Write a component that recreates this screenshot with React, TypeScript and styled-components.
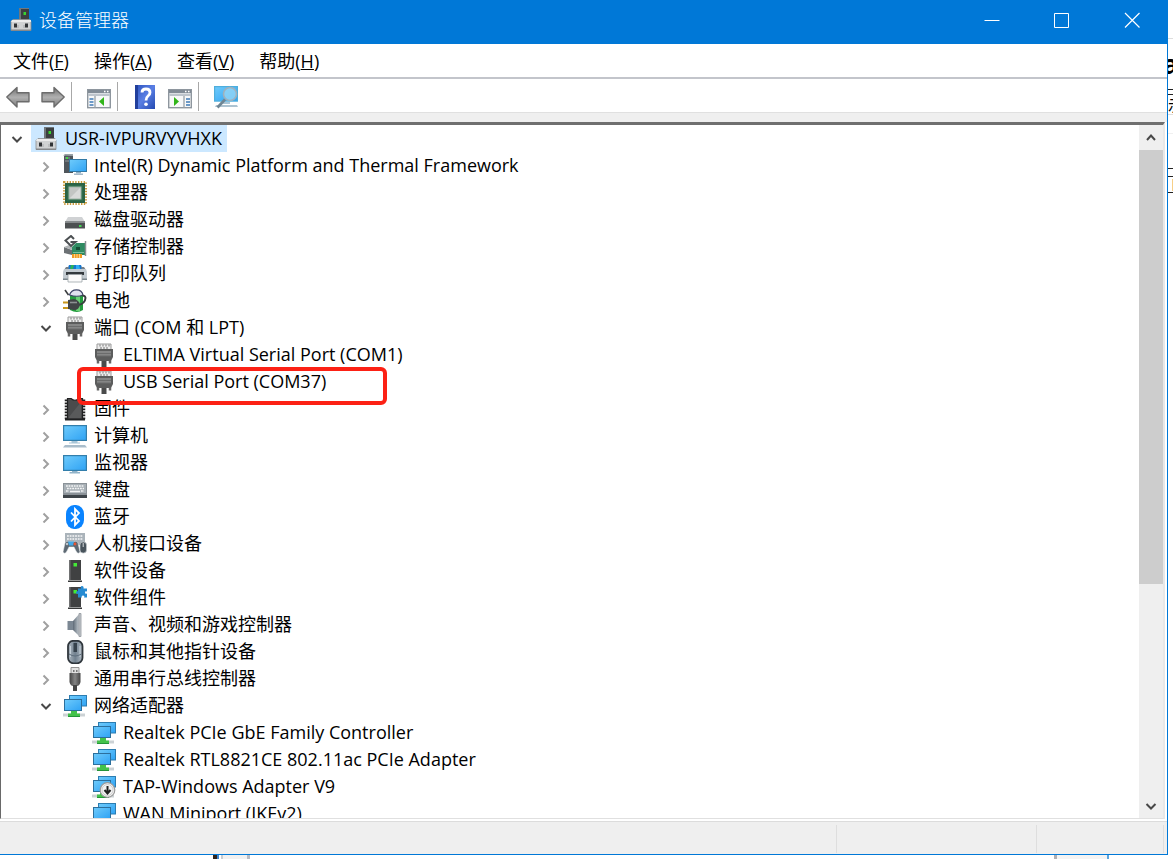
import React from 'react';
import styled, { createGlobalStyle, css } from 'styled-components';

const GlobalStyle = createGlobalStyle`
  * { box-sizing: border-box; }
  html, body { margin: 0; padding: 0; background: #fff; }
  body, button {
    font-family: "Open Sans", "Noto Sans CJK SC", sans-serif;
    font-size: 18px;
    line-height: 27px;
    color: #000;
  }
  button { border: 0; padding: 0; margin: 0; background: transparent; }
  svg { display: block; flex: none; }
`;

/* ---------- layout ---------- */

const Desktop = styled.div`
  display: flex;
  flex-direction: column;
  height: 100vh;
  overflow: hidden;
`;

const DesktopRow = styled.div`
  display: flex;
  flex: 1;
  min-height: 0;
`;

const Window = styled.main`
  display: flex;
  flex-direction: column;
  flex: 1;
  min-width: 0;
  background: #fff;
  border-right: 1px solid #0078d7;
  border-bottom: 1px solid #0078d7;
`;

const TitleBar = styled.header`
  display: flex;
  align-items: center;
  flex: none;
  height: 44px;
  padding: 0 0 4px 9px;
  background: #0078d7;
`;

const Title = styled.h1`
  flex: 1;
  margin: 0 0 0 6px;
  font-size: 18px;
  font-weight: 300;
  color: #fff;
`;

const CaptionButton = styled.button`
  display: flex;
  align-items: center;
  justify-content: center;
  width: 70px;
  height: 40px;
`;

const MenuBar = styled.nav`
  display: flex;
  align-items: center;
  flex: none;
  gap: 25px;
  height: 35px;
  padding: 2px 13px 0;
  border-bottom: 2px solid #c3c5cb;
`;

const MenuButton = styled.button`
  white-space: nowrap;
`;

const ToolBar = styled.div`
  display: flex;
  align-items: center;
  flex: none;
  height: 33px;
  padding: 2px 6px 0;
`;

const ToolButton = styled.button`
  width: 24px;
  height: 24px;
  & + & { margin-left: 11px; }
`;

const ToolSeparator = styled.span`
  width: 1px;
  height: 29px;
  margin: 0 15px 0 6px;
  background: #a8a8a8;
`;

const Band = styled.div`
  flex: none;
  height: 10px;
  background: #efefef;
  border-top: 1px solid #e0e0e0;
`;

const TreeFrame = styled.section`
  display: flex;
  flex: 1;
  min-height: 0;
  margin-right: 2px;
  border-top: 3px solid #6f6f6f;
  border-left: 1px solid #696969;
  border-right: 2px solid #e8e8e8;
  border-bottom: 1px solid #e0e0e0;
`;

const Tree = styled.ul`
  flex: 1;
  min-width: 0;
  margin: 0;
  padding: 0;
  list-style: none;
  overflow: hidden;
`;

const Row = styled.li<{ $level: number }>`
  display: flex;
  align-items: center;
  height: 27px;
  padding-left: ${(p) => p.$level * 29}px;
`;

const Expander = styled.button`
  display: flex;
  align-items: center;
  justify-content: center;
  flex: none;
  width: 30px;
  height: 27px;
  padding-left: 1px;
`;

const ExpanderSpace = styled.span`
  flex: none;
  width: 30px;
`;

const NodeLabel = styled.span<{ $selected?: boolean }>`
  position: relative;
  display: flex;
  align-items: center;
  gap: 7px;
  height: 27px;
  padding: 0 5px 0 3px;
  white-space: nowrap;
  ${(p) => p.$selected && css`background: #cce8ff;`}
`;

const Callout = styled.span`
  position: absolute;
  top: -1px;
  left: -12px;
  z-index: 1;
  width: 310px;
  height: 38px;
  border: 4px solid #fc2115;
  border-radius: 6px;
`;

const ScrollBar = styled.div`
  display: flex;
  flex-direction: column;
  flex: none;
  width: 24px;
  background: #efefef;
`;

const ScrollButton = styled.button`
  display: flex;
  align-items: center;
  justify-content: center;
  flex: none;
  width: 24px;
  height: 25px;
`;

const ScrollTrack = styled.div`
  flex: 1;
  min-height: 0;
`;

const ScrollThumb = styled.div`
  height: calc(100% * 27 / 40);
  background: #cdcdcd;
`;

const StatusBar = styled.footer`
  display: flex;
  flex: none;
  height: 33px;
  margin-top: 2px;
  padding: 3px 3px 1px 0;
  background: #efefef;
  border-top: 1px solid #dcdcdc;
`;

const StatusCell = styled.span<{ $width?: number }>`
  ${(p) => (p.$width ? `width: ${p.$width}px;` : 'flex: 1;')}
  border-right: 1px solid #dedede;
`;

/* ---------- page behind the window ---------- */

const PageEdge = styled.aside`
  display: flex;
  flex-direction: column;
  flex: none;
  width: 5px;
  overflow: hidden;
`;

const EdgeBlock = styled.div<{ $height: number; $line: string }>`
  flex: none;
  height: ${(p) => p.$height}px;
  border-bottom: 1px solid ${(p) => p.$line};
`;

const EdgeText = styled.div<{ $height: number; $size: number; $bold?: boolean; $line: string }>`
  display: flex;
  align-items: center;
  justify-content: ${(p) => (p.$bold ? 'center' : 'flex-start')};
  flex: none;
  width: 5px;
  height: ${(p) => p.$height}px;
  font-size: ${(p) => p.$size}px;
  font-weight: ${(p) => (p.$bold ? 700 : 400)};
  line-height: ${(p) => p.$height}px;
  border-bottom: 1px solid ${(p) => p.$line};
  overflow: hidden;
`;

const PageFoot = styled.div`
  display: flex;
  flex: none;
  height: 4px;
  padding-right: 64px;
`;

const FootSpace = styled.span<{ $width?: number }>`
  ${(p) => (p.$width ? `width: ${p.$width}px;` : 'flex: 1;')}
`;

const FootMark = styled.span<{ $color: string; $width: number }>`
  width: ${(p) => p.$width}px;
  background: ${(p) => p.$color};
`;

/* ---------- icons ---------- */

const Svg = ({ children }: { children: React.ReactNode }) => (
  <svg width="24" height="24" viewBox="0 0 24 24" aria-hidden="true">{children}</svg>
);

const HiddenSvg = styled.svg`
  position: absolute;
`;

const Gradients = () => (
  <HiddenSvg width="0" height="0" aria-hidden="true">
    <defs>
      <linearGradient id="screen" x1="0" y1="0" x2="1" y2="1">
        <stop offset="0" stopColor="#6fcbfb" /><stop offset="1" stopColor="#2ea2f4" />
      </linearGradient>
      <linearGradient id="arrow" x1="0" y1="0" x2="0" y2="1">
        <stop offset="0" stopColor="#6e6e6e" /><stop offset="0.5" stopColor="#b0b0b0" /><stop offset="1" stopColor="#7c7c7c" />
      </linearGradient>
      <linearGradient id="steel" x1="0" y1="0" x2="1" y2="0">
        <stop offset="0" stopColor="#aeb8c1" /><stop offset="0.5" stopColor="#71818f" /><stop offset="1" stopColor="#aeb8c1" />
      </linearGradient>
      <linearGradient id="cone" x1="0" y1="0" x2="1" y2="0">
        <stop offset="0" stopColor="#5e6a76" /><stop offset="0.6" stopColor="#a2abb3" /><stop offset="1" stopColor="#d6d9dc" />
      </linearGradient>
      <linearGradient id="dark" x1="0" y1="0" x2="1" y2="0">
        <stop offset="0" stopColor="#444" /><stop offset="0.5" stopColor="#858585" /><stop offset="1" stopColor="#444" />
      </linearGradient>
      <linearGradient id="help" x1="0" y1="0" x2="1" y2="1">
        <stop offset="0" stopColor="#2c52bd" /><stop offset="0.5" stopColor="#5a7fe4" /><stop offset="1" stopColor="#2449b0" />
      </linearGradient>
    </defs>
  </HiddenSvg>
);

const ManagerIcon = () => (
  <Svg>
    <path d="M10 0h10v14H10z" fill="#70777c" />
    <path d="M12 1h8v13h-8z" fill="#3c3f41" />
    <rect x="14.500" y="4" width="2.500" height="3" fill="#38d430" />
    <path d="M4 11.500h17l1 2v9H2v-9z" fill="#d0d2d3" stroke="#8b8e91" strokeWidth=".8" />
    <path d="M2 14h20v-2H3z" fill="#ececec" />
    <path d="M2 21.500h20v1.500H2z" fill="#87898b" />
    <path d="M5 15.500h3v4H5zM16 15.500h3v4h-3z" fill="#303336" />
    <path d="M9 20v-3M15 20v-3" stroke="#a6a8aa" />
  </Svg>
);

const PlatformIcon = () => (
  <Svg>
    <path d="M1 2l2-2h7v19H1z" fill="#50565b" />
    <path d="M0 1.500L2 0h8v2z" fill="#9aa1a6" />
    <path d="M2 4h5M2 7h5" stroke="#92999e" />
    <rect x="3" y="3" width="2" height="2" fill="#49d74a" />
    <rect x="6.500" y="5.500" width="17" height="12" fill="url(#screen)" stroke="#3279a5" />
    <path d="M13 18h5v1.500h-5z" fill="#8fb0c6" /><path d="M11 19.500h9V21h-9z" fill="#a5b9c8" />
  </Svg>
);

const CpuIcon = () => (
  <Svg>
    <rect x="1" y="1" width="22" height="22" fill="none" stroke="#c99a3c" strokeWidth="2" strokeDasharray="1.400 1.400" />
    <rect x="2" y="2" width="20" height="20" fill="#2f6b4b" />
    <rect x="3" y="3" width="18" height="18" fill="none" stroke="#265a3e" />
    <path d="M6 6h12v12H6z" fill="#c3c5c3" /><path d="M6 18L18 6v12z" fill="#d9dad9" />
    <rect x="6" y="6" width="12" height="12" fill="none" stroke="#9fb5a6" />
  </Svg>
);

const DiskIcon = () => (
  <Svg>
    <path d="M5 9h14l3 5H2z" fill="#d0d2d4" />
    <path d="M2 13.500h20v7H2z" fill="#4d5052" />
    <path d="M2 13.500h20V15H2z" fill="#85898b" />
    <rect x="16" y="17" width="2.500" height="2" fill="#45d653" />
  </Svg>
);

const StorageIcon = () => (
  <Svg>
    <path d="M1 12l8 3v5l-8-2z" fill="#6c7174" />
    <path d="M1 12l5-2 6 3-3 2z" fill="#b0b4b6" />
    <path d="M11 4L8 1 2.500 5.500 8 11l4.500-4H7.500" fill="none" stroke="#4b4f52" strokeWidth="2" />
    <path d="M9 12l4-4h9v12H9z" fill="#2f8b62" />
    <path d="M22.500 6v15" stroke="#8b9094" strokeWidth="1.500" />
    <path d="M13 12h4v3h-4z" fill="#164f37" />
    <path d="M10 17.500h11" stroke="#77bd9a" />
    <path d="M9 19h10v4H9z" fill="#f29b25" />
    <path d="M11.500 19v4M14 19v4M16.500 19v4" stroke="#ffe0a0" strokeWidth=".8" />
  </Svg>
);

const PrinterIcon = () => (
  <Svg>
    <path d="M6 3h12l2 5H4z" fill="#1576cf" /><path d="M8 3h3l-1 4H7z" fill="#2cb45a" /><path d="M13 3h3l1 4h-4z" fill="#30aef3" />
    <path d="M3 5h3L5 8H1zM18 5h3l2 3h-4z" fill="#788188" />
    <path d="M1 7h22l1 3v8H0v-8z" fill="#c3cbd1" />
    <path d="M3 10h18v3H3z" fill="#343a3e" />
    <path d="M0 16.500h24V18H0z" fill="#7b868d" />
    <path d="M5 12.500h14V20H5z" fill="#fbfbfb" stroke="#9da4a8" strokeWidth=".8" />
  </Svg>
);

const BatteryIcon = () => (
  <Svg>
    <path d="M2 1l3.500 5" stroke="#3b3e40" strokeWidth="1.600" />
    <path d="M7 5h13v16q-6 4-13 0z" fill="#249c3e" />
    <path d="M13 7h4v15h-4z" fill="#86e68a" opacity=".7" />
    <path d="M6.500 6Q8 .8 13.500.8T20 6q-6 2.500-13.500 0z" fill="#dfe2ee" stroke="#3d4466" strokeWidth="1.200" />
    <path d="M15 16q7-1 7.500-7-.5-3-3-2" fill="none" stroke="#393c3e" strokeWidth="2" />
    <path d="M0 13.500h6M0 19h6" stroke="#c8961a" strokeWidth="2" />
    <path d="M5 11l6-1q5 1 6 5.500-1 5.500-6 5.500l-6-1z" fill="#414446" />
    <path d="M7 13.500h7" stroke="#8d9092" strokeWidth="1.600" />
  </Svg>
);

const PortIcon = () => (
  <Svg>
    <path d="M5 1h14v6H5z" fill="#ededed" stroke="#9b9b9b" />
    <path d="M8 1.500v2M11 1.500v2M14 1.500v2M17 1.500v2M9 4v2M12 4v2M15 4v2" stroke="#777" strokeWidth="1" />
    <path d="M3 6h18v8l-2 4H5l-2-4z" fill="#5c5d5d" />
    <path d="M5 8h14v5H5z" fill="#858686" />
    <path d="M5 10.500h14M5 13h14" stroke="#6b6c6c" />
    <path d="M9.500 18h5v6h-5z" fill="#4a4b4b" />
    <path d="M6 17.500v3M18 17.500v3" stroke="#666" strokeWidth="2.500" />
  </Svg>
);

const FirmwareIcon = () => (
  <Svg>
    <path d="M3 2.500v20M21 2.500v20" stroke="#222" strokeWidth="2.500" strokeDasharray="1.800 1.200" />
    <path d="M4.500 1.500H8Q12 5 16 1.500h3.500v21h-15z" fill="#4a4b4c" stroke="#202122" strokeWidth="1.200" />
    <path d="M6 20L18 5v16H6z" fill="#606162" opacity=".7" />
    <path d="M2 22.500h20" stroke="#202122" strokeWidth="2" />
  </Svg>
);

const ComputerIcon = () => (
  <Svg>
    <rect x=".6" y="1.600" width="22.800" height="14.800" fill="url(#screen)" stroke="#327eab" strokeWidth="1.200" />
    <path d="M8.500 17h6v1.500H17V19.500H6v-1h2.500z" fill="#a8c5d7" />
    <path d="M2 21h20l2 2.500H0z" fill="#a9bdcb" />
  </Svg>
);

const MonitorIcon = () => (
  <Svg>
    <rect x=".6" y="4.600" width="22.800" height="14.800" fill="url(#screen)" stroke="#327eab" strokeWidth="1.200" />
    <path d="M9 20h5.500v1H17v1.500H6.500V21H9z" fill="#91b3c9" />
  </Svg>
);

const KeyboardIcon = () => (
  <Svg>
    <path d="M0 5h24v14H0z" fill="#8b9298" />
    <path d="M1 6h22v9H1z" fill="#a8b0b6" />
    <path d="M3 8h18M4 10.500h17M3 13h3M18 13h3" stroke="#f4f5f6" strokeWidth="1.500" strokeDasharray="1.800 .8" />
    <path d="M7 13.500h10" stroke="#f4f5f6" strokeWidth="1.500" />
    <path d="M0 17h24v3H0z" fill="#3e454a" />
  </Svg>
);

const BluetoothIcon = () => (
  <Svg>
    <rect x="3" y="0" width="18" height="24" rx="8" ry="9" fill="#0a84ff" />
    <path d="M8 7.500l8 8.500-4 4V4l4 4-8 8.500" fill="none" stroke="#fff" strokeWidth="1.800" />
  </Svg>
);

const HidIcon = () => (
  <Svg>
    <path d="M2 1h20v12H2z" fill="#aab3ba" />
    <path d="M4 4h16M4 7h16" stroke="#f6f7f8" strokeWidth="1.500" strokeDasharray="1.800 .9" />
    <path d="M0 20l2-9q1-3 5-1h3q4-2 5 1l2 9q-2 3-4-1l-2-4H6l-2 4q-2 4-4 1z" fill="#5d6973" stroke="#eff1f2" strokeWidth=".5" />
    <path d="M5 9.500h6l-1 4H6z" fill="#42a9e8" />
    <circle cx="12" cy="12" r="1.400" fill="#e75534" /><circle cx="4" cy="12" r="1.200" fill="#c1c7cb" />
    <rect x="17" y="10" width="6.500" height="11" rx="3" fill="#48535c" stroke="#c0c6ca" strokeWidth=".7" />
    <path d="M20.200 11v4" stroke="#d8dcde" />
  </Svg>
);

const Tower = () => (
  <>
    <path d="M6 1h12v20H6z" fill="#404142" /><path d="M6 1h1.500v20H6z" fill="#707172" />
    <rect x="10.500" y="4" width="3.500" height="3.500" fill="#43ea36" />
    <path d="M5 21.500h14v1.500H5z" fill="#373839" />
  </>
);

const SoftwareIcon = () => <Svg><Tower /></Svg>;

const ComponentIcon = () => (
  <Svg>
    <Tower />
    <path d="M15 2.500h3q-1-2.500 1-2.500t1.500 2.500H24v3q-2-1-2 1t2 1v4h-3q1-2-1-2t-1 2h-4V8q-2 0-2-1.500T15 5z" fill="#268bd2" />
  </Svg>
);

const SpeakerIcon = () => (
  <Svg>
    <path d="M4.500 8h6v9h-6z" fill="#7b8793" />
    <path d="M10 8l7-8v24l-7-7z" fill="url(#cone)" />
    <path d="M16 .5h2v23h-2z" fill="#c6cacd" stroke="#8f969c" strokeWidth=".8" />
  </Svg>
);

const MouseIcon = () => (
  <Svg>
    <rect x="5" y=".8" width="14.500" height="22.500" rx="5.500" fill="url(#steel)" stroke="#2f363c" strokeWidth="1.800" />
    <path d="M7.500 6v11M17 6v11" stroke="#c5d0d8" />
    <rect x="10.500" y="3" width="3.500" height="9" fill="#35414b" />
    <path d="M6 14q6 4 12.500 0" fill="none" stroke="#5d6d7b" />
  </Svg>
);

const UsbIcon = () => (
  <Svg>
    <path d="M8 .5h8V7H8z" fill="#e1e1e1" stroke="#929292" />
    <path d="M10 3h1.500v2H10zM13 3h1.500v2H13z" fill="#777" />
    <path d="M6.500 6h11v9q-1 4-3.500 4h-4q-2.500 0-3.500-4z" fill="url(#dark)" />
    <path d="M10 18h4v6h-4z" fill="#454545" />
  </Svg>
);

const NetworkArt = () => (
  <>
    <rect x="6.500" y="1.500" width="17" height="10.500" fill="url(#screen)" stroke="#2c7db1" />
    <rect x="1.500" y="5.500" width="17" height="11" fill="url(#screen)" stroke="#2c6f9c" />
    <path d="M0 19.500h22v3H0z" fill="#ccd2d5" />
    <path d="M8 17h6v2.500h3v3H5v-3h3z" fill="#43c24a" />
    <path d="M5 22.500h12" stroke="#25943a" />
  </>
);

const NetworkIcon = () => <Svg><NetworkArt /></Svg>;

const DisabledNetworkIcon = () => (
  <Svg>
    <NetworkArt />
    <circle cx="15.500" cy="15" r="7.300" fill="#f3f3f3" stroke="#999" strokeWidth="1.200" />
    <circle cx="15.500" cy="15" r="5.500" fill="none" stroke="#c4c4c4" strokeWidth=".8" />
    <path d="M15.500 11v8M12.500 15l3 3.500 3-3.500" fill="none" stroke="#202020" strokeWidth="2" />
  </Svg>
);

const BackIcon = () => (
  <Svg>
    <path d="M.8 12L11 2.500v5.300h12v9H11v5.200z" fill="url(#arrow)" stroke="#6c6c6c" strokeWidth="1.400" strokeLinejoin="round" />
  </Svg>
);

const ForwardIcon = () => (
  <Svg>
    <path d="M23.200 12L13 2.500v5.300H1v9h12v5.200z" fill="url(#arrow)" stroke="#6c6c6c" strokeWidth="1.400" strokeLinejoin="round" />
  </Svg>
);

const PaneIcon = ({ right }: { right?: boolean }) => (
  <Svg>
    <rect x=".7" y="4.700" width="22.600" height="18" fill="#f7f8f9" stroke="#8e969e" strokeWidth="1.400" />
    <path d="M1 5h22v3H1z" fill="#818b96" /><path d="M1 8.500h22v2.500H1z" fill="#bdc4cc" />
    <path d="M17 6.500h1.500M20 6.500h1.500" stroke="#fff" strokeWidth="1.500" />
    {right ? (
      <>
        <path d="M16 11v12" stroke="#98a0a8" strokeWidth="1.300" />
        <path d="M18 14h4M18 17h4M18 20h4" stroke="#3f79b7" strokeWidth="1.500" />
        <path d="M6 12l5 4.500L6 21z" fill="#31b51a" />
      </>
    ) : (
      <>
        <path d="M8 11v12" stroke="#98a0a8" strokeWidth="1.300" />
        <path d="M2.500 14h4M2.500 17h4M2.500 20h4" stroke="#3f79b7" strokeWidth="1.500" />
        <path d="M17 12l-5 4.500 5 4.500z" fill="#31b51a" />
      </>
    )}
  </Svg>
);

const HelpIcon = () => (
  <Svg>
    <path d="M2 0h20v24H2z" fill="url(#help)" /><path d="M2 0h3v24H2z" fill="#213f9c" />
    <path d="M9 7.500Q9 4 13 4t4 3.500q0 2-2 3.500t-2 4.500" fill="none" stroke="#fff" strokeWidth="2.800" />
    <circle cx="13" cy="19.200" r="1.800" fill="#fff" />
  </Svg>
);

const ScanIcon = () => (
  <Svg>
    <rect x=".6" y="1.600" width="22.800" height="14.500" fill="url(#screen)" stroke="#4faedc" strokeWidth="1.200" />
    <path d="M9 17h7v2H9z" fill="#a8c5d7" /><path d="M2 20h21l1 2H1z" fill="#adc3d1" />
    <circle cx="16" cy="9" r="6.500" fill="#8fd3f6" fillOpacity=".85" stroke="#9fb1bd" strokeWidth="1.600" />
    <path d="M11 14.500l-7.500 8" stroke="#6f8593" strokeWidth="2.600" />
  </Svg>
);

const Chevron = ({ dir }: { dir: 'right' | 'down' | 'up' }) => {
  const paths = { right: 'M3.500 2.500L8 7l-4.500 4.500', down: 'M1.500 4L6 8.500 10.500 4', up: 'M2 8l4-4.500L10 8' };
  return (
    <svg width="12" height="12" viewBox="0 0 12 12" aria-hidden="true">
      <path d={paths[dir]} fill="none" stroke={dir === 'right' ? '#a0a0a0' : '#484848'} strokeWidth="2" />
    </svg>
  );
};

/* ---------- data ---------- */

type Node = {
  level: number;
  text: string;
  icon: React.ComponentType;
  state?: 'open' | 'closed';
  selected?: boolean;
  marked?: boolean;
};

const nodes: Node[] = [
  { level: 0, text: 'USR-IVPURVYVHXK', icon: ManagerIcon, state: 'open', selected: true },
  { level: 1, text: 'Intel(R) Dynamic Platform and Thermal Framework', icon: PlatformIcon, state: 'closed' },
  { level: 1, text: '处理器', icon: CpuIcon, state: 'closed' },
  { level: 1, text: '磁盘驱动器', icon: DiskIcon, state: 'closed' },
  { level: 1, text: '存储控制器', icon: StorageIcon, state: 'closed' },
  { level: 1, text: '打印队列', icon: PrinterIcon, state: 'closed' },
  { level: 1, text: '电池', icon: BatteryIcon, state: 'closed' },
  { level: 1, text: '端口 (COM 和 LPT)', icon: PortIcon, state: 'open' },
  { level: 2, text: 'ELTIMA Virtual Serial Port (COM1)', icon: PortIcon },
  { level: 2, text: 'USB Serial Port (COM37)', icon: PortIcon, marked: true },
  { level: 1, text: '固件', icon: FirmwareIcon, state: 'closed' },
  { level: 1, text: '计算机', icon: ComputerIcon, state: 'closed' },
  { level: 1, text: '监视器', icon: MonitorIcon, state: 'closed' },
  { level: 1, text: '键盘', icon: KeyboardIcon, state: 'closed' },
  { level: 1, text: '蓝牙', icon: BluetoothIcon, state: 'closed' },
  { level: 1, text: '人机接口设备', icon: HidIcon, state: 'closed' },
  { level: 1, text: '软件设备', icon: SoftwareIcon, state: 'closed' },
  { level: 1, text: '软件组件', icon: ComponentIcon, state: 'closed' },
  { level: 1, text: '声音、视频和游戏控制器', icon: SpeakerIcon, state: 'closed' },
  { level: 1, text: '鼠标和其他指针设备', icon: MouseIcon, state: 'closed' },
  { level: 1, text: '通用串行总线控制器', icon: UsbIcon, state: 'closed' },
  { level: 1, text: '网络适配器', icon: NetworkIcon, state: 'open' },
  { level: 2, text: 'Realtek PCIe GbE Family Controller', icon: NetworkIcon },
  { level: 2, text: 'Realtek RTL8821CE 802.11ac PCIe Adapter', icon: NetworkIcon },
  { level: 2, text: 'TAP-Windows Adapter V9', icon: DisabledNetworkIcon },
  { level: 2, text: 'WAN Miniport (IKEv2)', icon: NetworkIcon },
];

const menus = [['文件', 'F'], ['操作', 'A'], ['查看', 'V'], ['帮助', 'H']];

const TreeNode = ({ node }: { node: Node }) => {
  const Icon = node.icon;
  return (
    <Row
      $level={node.level}
      role="treeitem"
      aria-level={node.level + 1}
      aria-selected={!!node.selected}
      aria-expanded={node.state ? node.state === 'open' : undefined}
    >
      {node.state ? (
        <Expander aria-label={node.text}>
          <Chevron dir={node.state === 'open' ? 'down' : 'right'} />
        </Expander>
      ) : (
        <ExpanderSpace />
      )}
      <NodeLabel $selected={node.selected}>
        <Icon />
        {node.text}
        {node.marked && <Callout />}
      </NodeLabel>
    </Row>
  );
};

export default function App() {
  return (
    <Desktop>
      <GlobalStyle />
      <Gradients />
      <DesktopRow>
        <Window>
          <TitleBar>
            <ManagerIcon />
            <Title>设备管理器</Title>
            <CaptionButton aria-label="最小化">
              <svg width="16" height="16" viewBox="0 0 16 16"><path d="M.5 8.500h15" stroke="#fff" /></svg>
            </CaptionButton>
            <CaptionButton aria-label="最大化">
              <svg width="16" height="16" viewBox="0 0 16 16"><path d="M.5 1.500h14v14H.5z" fill="none" stroke="#fff" /></svg>
            </CaptionButton>
            <CaptionButton aria-label="关闭">
              <svg width="16" height="16" viewBox="0 0 16 16"><path d="M1 1l14.500 14.500M15.500 1L1 15.500" stroke="#fff" strokeWidth="1.200" /></svg>
            </CaptionButton>
          </TitleBar>
          <MenuBar>
            {menus.map(([name, key]) => (
              <MenuButton key={key}>{name}(<u>{key}</u>)</MenuButton>
            ))}
          </MenuBar>
          <ToolBar role="toolbar">
            <ToolButton aria-label="后退"><BackIcon /></ToolButton>
            <ToolButton aria-label="前进"><ForwardIcon /></ToolButton>
            <ToolSeparator />
            <ToolButton aria-label="显示/隐藏控制台树"><PaneIcon /></ToolButton>
            <ToolSeparator />
            <ToolButton aria-label="帮助"><HelpIcon /></ToolButton>
            <ToolButton aria-label="显示/隐藏操作窗格"><PaneIcon right /></ToolButton>
            <ToolSeparator />
            <ToolButton aria-label="扫描检测硬件改动"><ScanIcon /></ToolButton>
          </ToolBar>
          <Band />
          <TreeFrame>
            <Tree role="tree">
              {nodes.map((node) => <TreeNode key={node.text} node={node} />)}
            </Tree>
            <ScrollBar>
              <ScrollButton aria-label="向上滚动"><Chevron dir="up" /></ScrollButton>
              <ScrollTrack><ScrollThumb /></ScrollTrack>
              <ScrollButton aria-label="向下滚动"><Chevron dir="down" /></ScrollButton>
            </ScrollBar>
          </TreeFrame>
          <StatusBar>
            <StatusCell />
            <StatusCell $width={200} />
            <StatusCell $width={127} />
          </StatusBar>
        </Window>
        <PageEdge aria-hidden="true">
          <EdgeBlock $height={39} $line="#dedede" />
          <EdgeText $height={51} $size={26} $bold $line="#222">a</EdgeText>
          <EdgeBlock $height={5} $line="#222" />
          <EdgeText $height={20} $size={15} $line="#dedede">示</EdgeText>
          <EdgeBlock $height={19} $line="#f0f0f0" />
          <EdgeBlock $height={35} $line="#222" />
          <EdgeBlock $height={8} $line="#222" />
          <EdgeText $height={16} $size={16} $line="#222">Ⅱ</EdgeText>
        </PageEdge>
      </DesktopRow>
      <PageFoot aria-hidden="true">
        <FootSpace $width={213} />
        <FootMark $color="#30241c" $width={4} />
        <FootMark $color="#3f86cf" $width={2} />
        <FootSpace $width={2} />
        <FootMark $color="#c9cdd2" $width={2} />
        <FootMark $color="#f1f1f1" $width={24} />
        <FootMark $color="#b9bcc4" $width={3} />
        <FootSpace />
        <FootMark $color="#b0b0b4" $width={3} />
        <FootMark $color="#f4f4f4" $width={50} />
        <FootMark $color="#5aa5e0" $width={2} />
      </PageFoot>
    </Desktop>
  );
}
